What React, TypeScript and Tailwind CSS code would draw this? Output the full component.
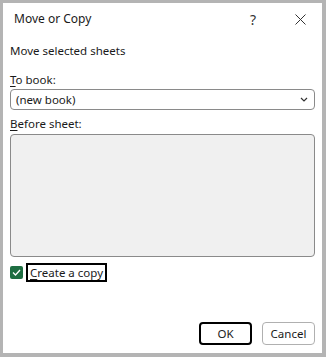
import { useState } from "react";

export default function App() {
  const [copy, setCopy] = useState(true);

  return (
    <div className="h-[357px] w-[326px] bg-[#b4b4b4] pb-[4px] pl-[3px] pr-[4px] pt-[3px] font-['Noto_Sans',sans-serif] text-[11.5px] text-[#1a1a1a]">
      <div className="flex h-full flex-col bg-white">
        {/* title bar */}
        <div className="flex h-[32px] items-center pl-[11px] pr-[16px]">
          <span className="text-[12px]">Move or Copy</span>
          <span className="ml-auto mr-[39px] text-[14px] text-[#333]">?</span>
          <svg width="11" height="11" viewBox="0 0 11 11" className="text-[#333]">
            <path d="M0.5 0.5L10.5 10.5M10.5 0.5L0.5 10.5" stroke="currentColor" strokeWidth="1" />
          </svg>
        </div>

        <div className="flex flex-1 flex-col px-[7px]">
          <p className="mt-[8px] leading-[16px]">Move selected sheets</p>

          <p className="mt-[13px] leading-[16px]">
            <span className="underline underline-offset-2">T</span>o book:
          </p>
          <div className="mt-[1px] flex h-[21px] shrink-0 items-center rounded-[4px] border border-[#8a8a8a] pl-[5px] pr-[6px]">
            <span>(new book)</span>
            <svg width="8" height="5" viewBox="0 0 8 5" className="ml-auto">
              <path d="M1 1L4 4L7 1" stroke="#333" strokeWidth="1.2" fill="none" />
            </svg>
          </div>

          <p className="mt-[6px] leading-[16px]">
            <span className="underline underline-offset-2">B</span>efore sheet:
          </p>
          <div className="mt-[2px] h-[123px] shrink-0 rounded-[4px] border border-[#8a8a8a] bg-[#f0f0f0]" />

          <label className="mt-[6px] flex items-center gap-[3px]">
            <button
              type="button"
              onClick={() => setCopy(!copy)}
              className={`flex h-[13px] w-[13px] items-center justify-center rounded-[2px] ${copy ? "bg-[#1e6e42]" : "border border-[#555] bg-white"}`}
            >
              {copy && (
                <svg width="9" height="7" viewBox="0 0 9 7">
                  <path d="M1 3.5L3.5 6L8 1" stroke="white" strokeWidth="1.3" fill="none" />
                </svg>
              )}
            </button>
            <span className="border-2 border-black px-[2px] leading-[15px]">
              <span className="underline underline-offset-2">C</span>reate a copy
            </span>
          </label>

          <div className="mt-auto mb-[8px] flex justify-end gap-[10px]">
            <button type="button" className="h-[23px] w-[53px] rounded-[4px] border-2 border-black">
              OK
            </button>
            <button type="button" className="h-[23px] w-[53px] rounded-[4px] border border-[#b0b0b0]">
              Cancel
            </button>
          </div>
        </div>
      </div>
    </div>
  );
}
